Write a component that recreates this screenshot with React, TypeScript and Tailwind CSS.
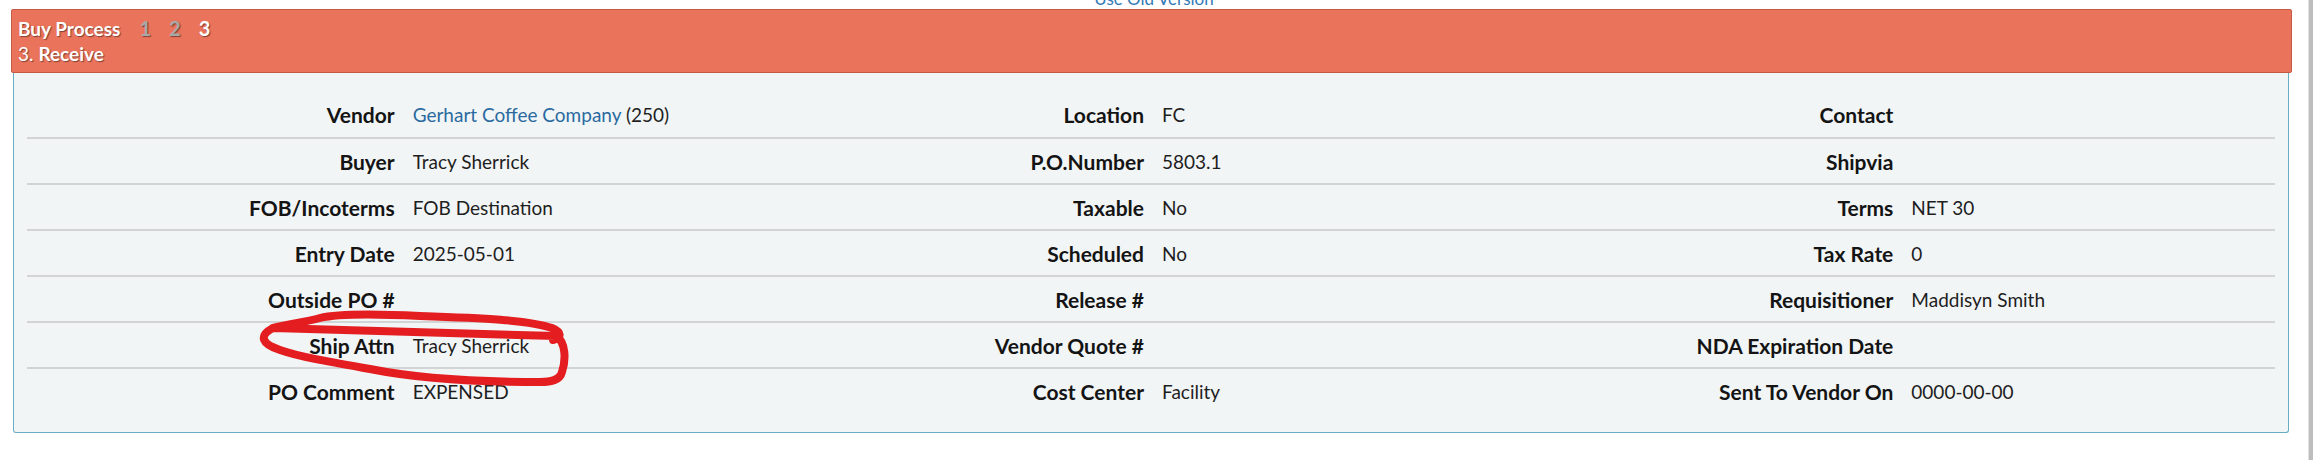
import React from 'react'

// 一行三组 label / value
type Cell = { label: string; value?: React.ReactNode }

const rows: Cell[][] = [
  [
    {
      label: 'Vendor',
      value: (
        <>
          <a className="text-[#2a6aa0]">Gerhart Coffee Company</a> (250)
        </>
      ),
    },
    { label: 'Location', value: 'FC' },
    { label: 'Contact' },
  ],
  [
    { label: 'Buyer', value: 'Tracy Sherrick' },
    { label: 'P.O.Number', value: '5803.1' },
    { label: 'Shipvia' },
  ],
  [
    { label: 'FOB/Incoterms', value: 'FOB Destination' },
    { label: 'Taxable', value: 'No' },
    { label: 'Terms', value: 'NET 30' },
  ],
  [
    { label: 'Entry Date', value: '2025-05-01' },
    { label: 'Scheduled', value: 'No' },
    { label: 'Tax Rate', value: '0' },
  ],
  [
    { label: 'Outside PO #' },
    { label: 'Release #' },
    { label: 'Requisitioner', value: 'Maddisyn Smith' },
  ],
  [
    { label: 'Ship Attn', value: 'Tracy Sherrick' },
    { label: 'Vendor Quote #' },
    { label: 'NDA Expiration Date' },
  ],
  [
    { label: 'PO Comment', value: 'EXPENSED' },
    { label: 'Cost Center', value: 'Facility' },
    { label: 'Sent To Vendor On', value: '0000-00-00' },
  ],
]

export default function App() {
  return (
    <div className="relative flex h-[460px] w-[2313px] overflow-hidden bg-white font-['Lato','Noto_Sans',sans-serif]">
      <div className="flex-1">
        {/* 顶部被裁掉的旧版链接 */}
        <div className="h-[9px] overflow-hidden text-center">
          <a className="-mt-[10px] block text-[17px] leading-[17px] text-[#337ab7]">Use Old Version</a>
        </div>

        <div className="ml-[11px] mr-[16px]">
          {/* 流程标题栏 */}
          <div className="rounded-[2px] border border-[#c45a45] bg-[#e9735b] px-[6px] pt-[6px] pb-[6px] text-[19px] leading-[25px] text-white [text-shadow:1px_1px_1px_rgba(0,0,0,0.45)]">
            <div className="flex items-center font-bold">
              <span>Buy Process</span>
              <span className="ml-[19px] text-[20px] text-[#a8a8a8]">1</span>
              <span className="ml-[18px] text-[20px] text-[#a8a8a8]">2</span>
              <span className="ml-[18px] text-[20px]">3</span>
            </div>
            <div>
              3. <span className="font-bold">Receive</span>
            </div>
          </div>

          {/* 订单信息面板 */}
          <div className="ml-[2px] mr-[3px] rounded-b-[3px] border border-t-0 border-[#69adc4] bg-[#f2f5f6] px-[13px] pt-[18px] pb-[19px]">
            {rows.map((row, i) => (
              <div
                key={i}
                className={`grid h-[46px] grid-cols-6 items-center pt-[2px] ${
                  i > 0 ? 'border-t-2 border-[#d2d4d6]' : ''
                }`}
              >
                {row.map((cell) => (
                  <React.Fragment key={cell.label}>
                    <div className="pr-[7px] text-right text-[21px] font-bold text-[#141414]">{cell.label}</div>
                    <div className="pl-[11px] text-[19px] text-[#1e1e1e]">{cell.value}</div>
                  </React.Fragment>
                ))}
              </div>
            ))}
          </div>
        </div>
      </div>

      {/* 滚动条边缘 */}
      <div className="w-[5px] border-l border-[#e2e2e2] bg-[#bdbdbd]" />

      {/* 手绘红圈标注 */}
      <svg className="pointer-events-none absolute left-0 top-0" width="2313" height="460" viewBox="0 0 2313 460">
        <path
          d="M 273 328 C 290 324, 305 322, 320 318 C 340 313, 380 314, 420 316 C 480 318, 530 320, 552 328 C 562 332, 562 338, 553 340 M 556 336 C 566 342, 566 360, 562 372 C 560 380, 552 382, 540 382 C 490 382, 420 379, 370 369 C 330 362, 300 357, 280 350 C 262 344, 258 336, 273 328 Z"
          fill="none"
          stroke="#e41e20"
          strokeWidth="8"
          strokeLinecap="round"
          strokeLinejoin="round"
        />
      </svg>
    </div>
  )
}
